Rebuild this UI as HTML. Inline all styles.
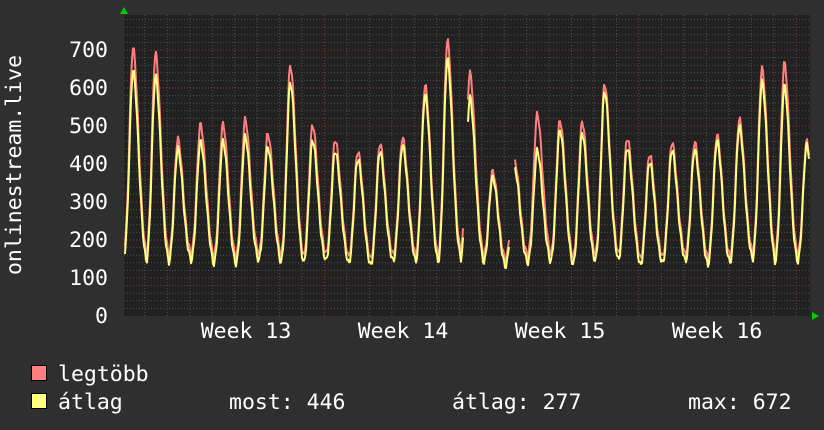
<!DOCTYPE html>
<html><head><meta charset="utf-8"><style>
html,body{margin:0;padding:0;background:#2f2f2f;}
svg{display:block}
text{font-family:"DejaVu Sans Mono","Liberation Mono",monospace;fill:#fff;font-size:21.5px}
</style></head><body>
<svg id="s" width="824" height="430" xmlns="http://www.w3.org/2000/svg">
<rect x="0" y="0" width="824" height="430" fill="#2f2f2f"/>
<rect x="124" y="15" width="686" height="301" fill="#212121"/>
<g id="grid"></g>
<g id="lines"></g>
<polygon points="120,14 128,14 124,7" fill="#00cc00"/>
<polygon points="812,312 812,320 819,316" fill="#00cc00"/>
<g style="font-size:20px">
<text x="108" y="57" text-anchor="end">700</text>
<text x="108" y="95" text-anchor="end">600</text>
<text x="108" y="133" text-anchor="end">500</text>
<text x="108" y="171" text-anchor="end">400</text>
<text x="108" y="209" text-anchor="end">300</text>
<text x="108" y="247" text-anchor="end">200</text>
<text x="108" y="285" text-anchor="end">100</text>
<text x="108" y="323" text-anchor="end">0</text>
</g>
<text x="246" y="338" text-anchor="middle">Week 13</text>
<text x="403" y="338" text-anchor="middle">Week 14</text>
<text x="560" y="338" text-anchor="middle">Week 15</text>
<text x="717" y="338" text-anchor="middle">Week 16</text>
<text transform="translate(21,165) rotate(-90)" text-anchor="middle">onlinestream.live</text>
<rect x="31.5" y="365.5" width="15" height="15" fill="#ff8080" stroke="#000"/>
<rect x="31.5" y="393.5" width="15" height="15" fill="#ffff80" stroke="#000"/>
<text x="58" y="381">legtöbb</text>
<text x="58" y="409">átlag</text>
<text x="229" y="409">most: 446</text>
<text x="452" y="409">átlag: 277</text>
<text x="688" y="409">max: 672</text>
</svg>
<script>
function Y(v){return 316-0.38*v;}
var g=document.getElementById('grid'),h='';
for(var v=20;v<=780;v+=20){var y=Y(v).toFixed(1);var maj=v%100==0;
h+='<line x1="124" x2="810" y1="'+y+'" y2="'+y+'" stroke="'+(maj?'#7a3a3a':'#505050')+'" stroke-width="1" stroke-dasharray="1,2"/>';}
for(var k=0;k<31;k++){var x=(144.8+22.46*k).toFixed(1);if(x>809)break;var maj=(k%7==1);
h+='<line y1="15" y2="316" x1="'+x+'" x2="'+x+'" stroke="'+(maj?'#7a3a3a':'#505050')+'" stroke-width="1" stroke-dasharray="1,2"/>';}
g.innerHTML=h;
var pk=[[710,650],[685,625],[465,440],[510,465],[500,455],[515,470],[485,450],[655,610],[500,460],[470,440],[430,410],[450,430],[475,455],[605,580],[720,670],[645,580],[380,365],[400,380],[535,440],[515,490],[505,475],[615,595],[470,445],[420,400],[460,440],[460,440],[470,455],[520,500],[655,620],[660,600],[460,450]];
function val(x,j){var bs=j?125:142;
var r=bs+8*Math.sin(x*1.7)+6*Math.sin(x*0.37);
var m=0;
for(var k=0;k<pk.length;k++){var px=133+22.46*k;var d=x-px;var w=d<0?5:7.5;
var f=Math.exp(-Math.pow(d/w,2));var P=pk[k][j];m=Math.max(m,(P-bs)*f);}
return r+m;}
var L=document.getElementById('lines'),o='';
[[0,'#ff7f7f'],[1,'#ffff80']].forEach(function(c){
var segs=[[125,463],[468,509],[515,809]];
segs.forEach(function(s){var p=[];for(var x=s[0];x<=s[1];x++){p.push(x+','+Y(val(x,c[0])).toFixed(1));}
o+='<polyline fill="none" stroke="'+c[1]+'" stroke-width="2" stroke-linejoin="round" points="'+p.join(' ')+'"/>';});
});
L.innerHTML=o;
</script>
</body></html>
